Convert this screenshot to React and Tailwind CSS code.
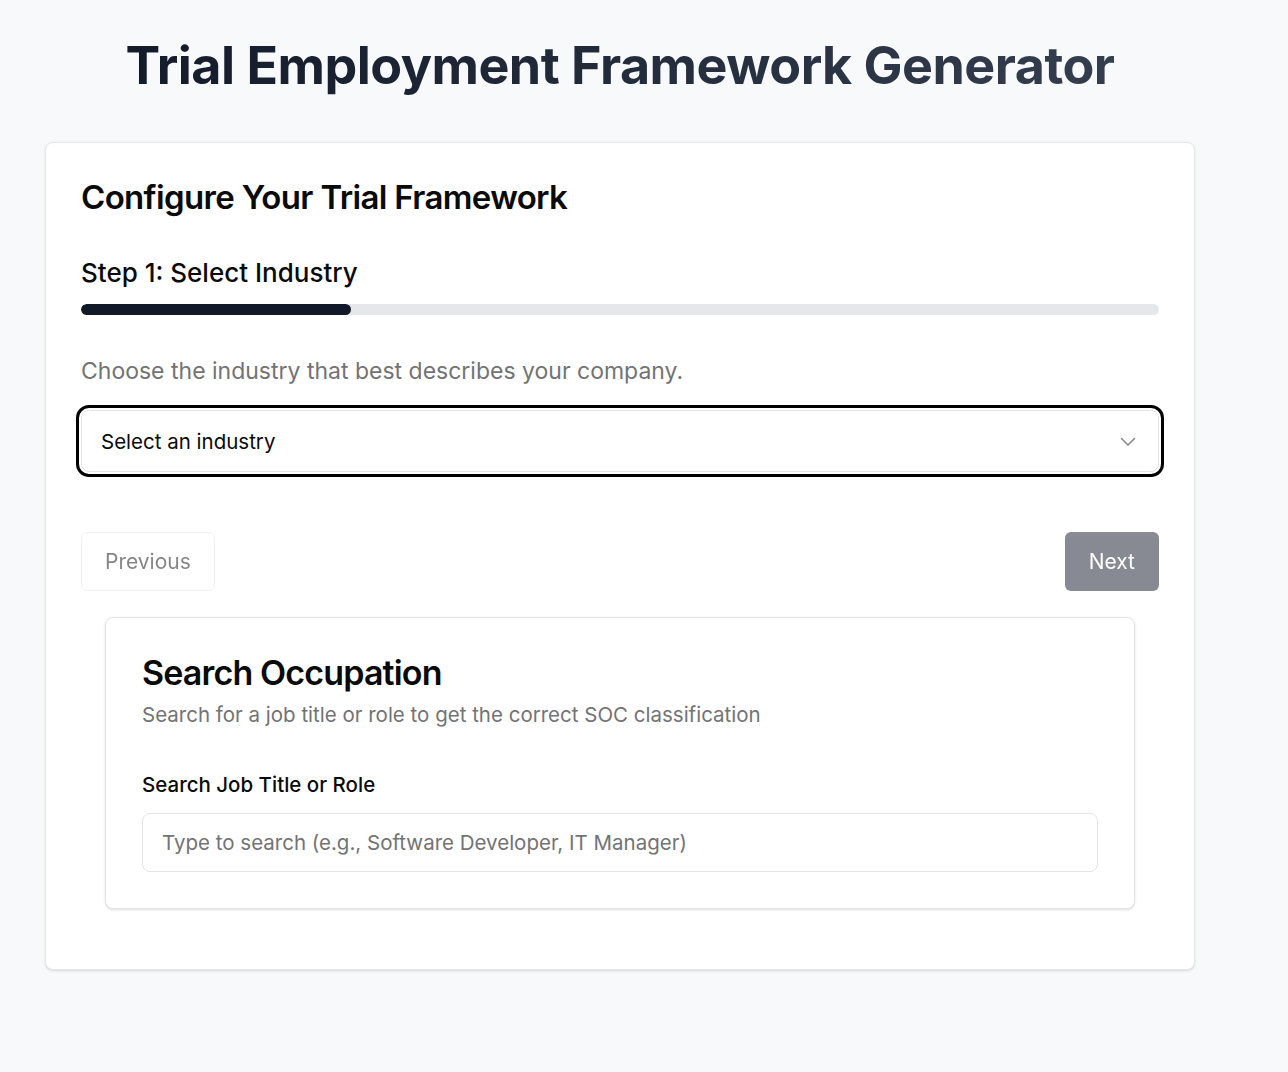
import React from "react";

function Chevron() {
  return (
    <svg width="16" height="10" viewBox="0 0 16 10" fill="none" stroke="currentColor" strokeWidth="1.6" strokeLinecap="round" strokeLinejoin="round">
      <path d="M1.5 1.5 8 8l6.5-6.5" />
    </svg>
  );
}

export default function App() {
  return (
    <div className="min-h-[1072px] bg-[#f8f9fb] text-[#0a0a0a]" style={{ fontFamily: "Inter, 'Noto Sans', sans-serif" }}>
      <div className="w-[1150px] ml-[45px] pt-[34px]">
        <h1 className="text-center text-[52px] leading-[64px] font-bold tracking-[-0.01em] bg-gradient-to-r from-[#111827] to-[#374151] bg-clip-text text-transparent">
          Trial Employment Framework Generator
        </h1>
        <div className="mt-[44px] bg-white border border-[#e5e7eb] rounded-lg shadow-sm px-[35px] pt-[34px] pb-[60px]">
          <h2 className="text-[33px] leading-[40px] font-semibold tracking-[-0.02em]">Configure Your Trial Framework</h2>
          <h3 className="mt-[40px] text-[26px] leading-[32px] font-medium">Step 1: Select Industry</h3>
          <div className="mt-[15px] h-[11px] w-full rounded-full bg-[#e5e7eb] overflow-hidden">
            <div className="h-full w-1/4 rounded-full bg-[#111827]" />
          </div>
          <p className="mt-[42px] text-[23px] leading-[28px] text-[#737373]">Choose the industry that best describes your company.</p>
          <div className="mt-[25px] h-[62px] flex items-center justify-between border border-[#e5e5e5] rounded-lg pl-[19px] pr-[22px] outline-[3px] outline-solid outline-black outline-offset-[2px] text-[20.5px]">
            <span className="mt-[3px]">Select an industry</span>
            <span className="text-[#8a8a8a] mt-[2px]"><Chevron /></span>
          </div>
          <div className="mt-[60px] flex justify-between">
            <button className="h-[59px] px-[23px] border border-[#e5e5e5] rounded-md bg-white text-[21px] text-[#0a0a0a] opacity-50">Previous</button>
            <button className="h-[59px] px-6 rounded-md bg-[#111827] text-[21px] text-white opacity-50">Next</button>
          </div>
          <div className="mx-6 mt-[26px] border border-[#e5e5e5] rounded-lg bg-white shadow-sm px-9 pt-[35px] pb-[36px]">
            <h2 className="text-[34px] leading-[40px] font-semibold tracking-tight">Search Occupation</h2>
            <p className="mt-[8px] text-[20.5px] leading-[28px] text-[#737373]">Search for a job title or role to get the correct SOC classification</p>
            <label className="block mt-[42px] text-[20.5px] leading-[28px] font-medium">Search Job Title or Role</label>
            <input
              className="mt-[14px] w-full h-[59px] border border-[#e5e5e5] rounded-lg px-[19px] text-[20.5px] placeholder:text-[#737373] outline-none"
              placeholder="Type to search (e.g., Software Developer, IT Manager)"
            />
          </div>
        </div>
      </div>
    </div>
  );
}
